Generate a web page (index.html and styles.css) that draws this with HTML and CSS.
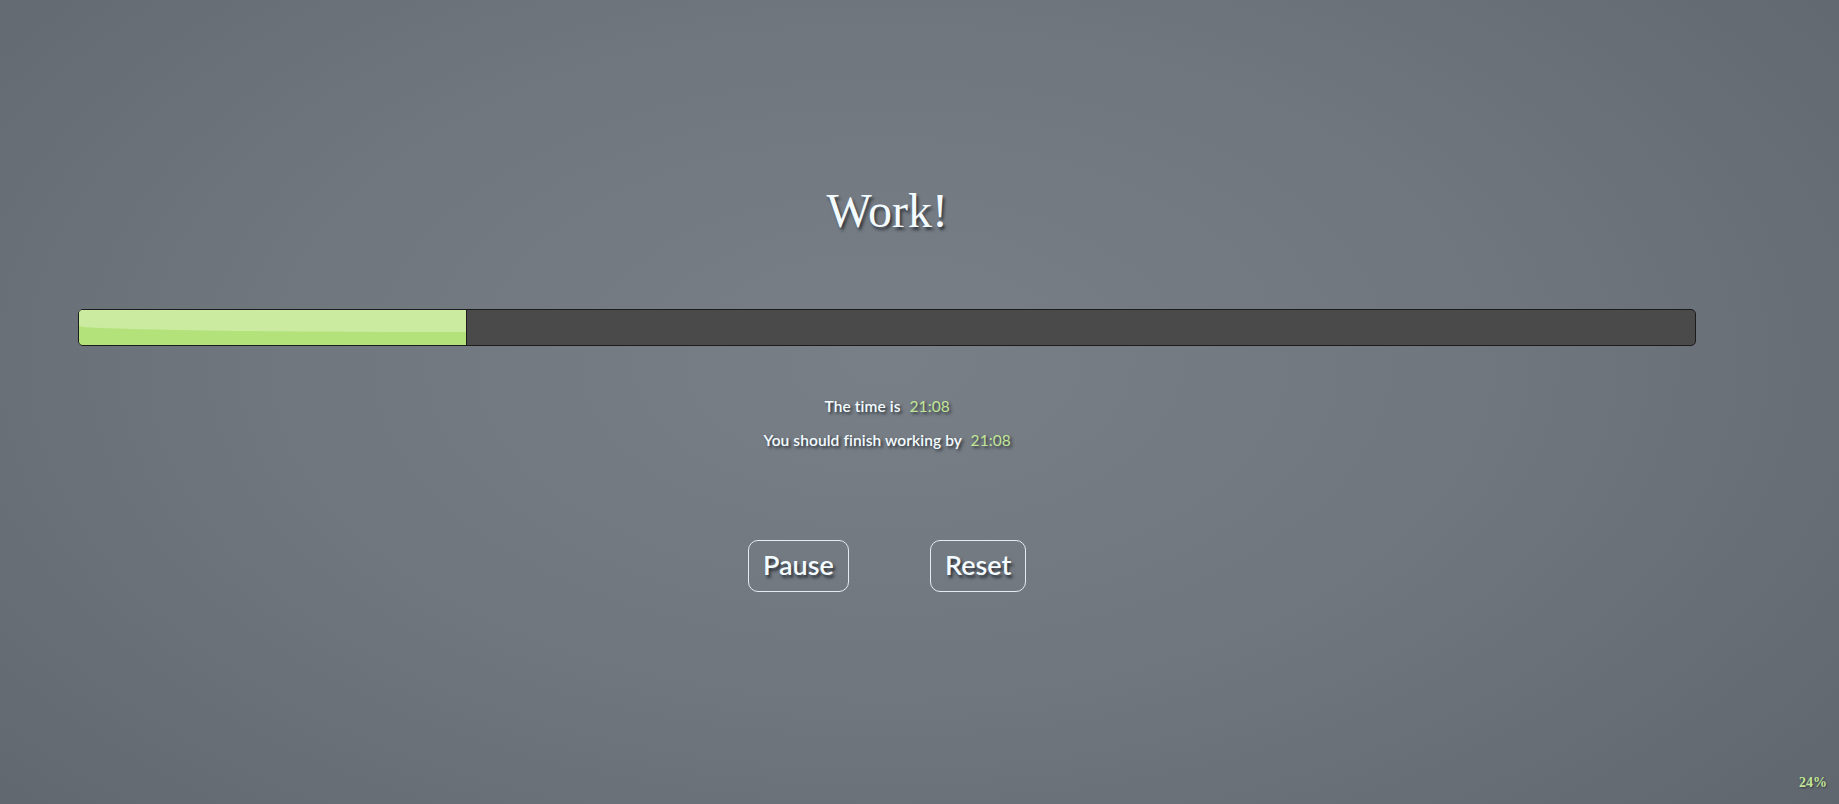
FILE: index.html
```html
<!DOCTYPE html>
<html lang="en">
<head>
<meta charset="utf-8">
<title>Work!</title>
<link rel="stylesheet" href="styles.css">
</head>
<body>
<main class="app">
  <h1 class="title">Work!</h1>
  <div class="bar">
    <div class="bar-fill" style="width: 24%"></div>
  </div>
  <div class="info">
    <p class="line">The time is <span class="hl">21:08</span></p>
    <p class="line">You should finish working by <span class="hl">21:08</span></p>
  </div>
  <div class="controls">
    <button class="btn">Pause</button>
    <button class="btn">Reset</button>
  </div>
</main>
<div class="percent">24%</div>
</body>
</html>
```

FILE: styles.css
```css
html, body {
  margin: 0;
  height: 100%;
}
body {
  background: radial-gradient(ellipse 75% 95% at 48% 45%, #787f87 0%, #6f767e 45%, #5c636b 100%);
  color: #f3fbff;
  font-family: Lato, "Open Sans", sans-serif;
  overflow: hidden;
  position: relative;
}
.app {
  width: 88%;
  margin-left: 78px;
  padding-top: 183px;
  display: flex;
  flex-direction: column;
  align-items: center;
}
.title {
  margin: 0;
  font-family: "Liberation Serif", "Times New Roman", serif;
  font-weight: normal;
  font-size: 48px;
  line-height: 56px;
  color: #f3fbff;
  text-shadow: 2px 3px 3px rgba(30, 34, 40, 0.75);
}
.bar {
  align-self: stretch;
  margin-top: 70px;
  height: 35px;
  border: 1px solid #1c1c1c;
  border-radius: 5px;
  background: #4a4a4a;
  overflow: hidden;
  display: flex;
}
.bar-fill {
  position: relative;
  height: 100%;
  background: #b3e27b;
  border-right: 1px solid #1c1c1c;
  box-sizing: border-box;
  overflow: hidden;
}
.bar-fill::before {
  content: "";
  position: absolute;
  left: 0;
  right: 0;
  top: 0;
  height: 22px;
  background: #cbeba0;
  border-bottom-left-radius: 100% 6px;
}
.info {
  margin-top: 43px;
  display: flex;
  flex-direction: column;
  align-items: center;
}
.line {
  margin: 0;
  font-size: 15.5px;
  line-height: 34px;
  font-weight: 600;
  letter-spacing: 0.1px;
  text-shadow: 2px 2px 3px rgba(30, 34, 40, 0.8);
}
.hl {
  color: #c2e697;
  margin-left: 5px;
  font-weight: 400;
}
.controls {
  margin-top: 83px;
  display: flex;
  gap: 81px;
}
.btn {
  font-family: Lato, "Open Sans", sans-serif;
  font-size: 27px;
  font-weight: 600;
  color: #f3fbff;
  background: transparent;
  border: 1px solid #e4ecef;
  border-radius: 10px;
  height: 52px;
  padding: 0 14px 4px;
  text-shadow: 2px 3px 3px rgba(30, 34, 40, 0.8);
  cursor: pointer;
}
.percent {
  position: absolute;
  right: 12px;
  bottom: 13px;
  font-family: "Liberation Serif", serif;
  font-weight: bold;
  font-size: 14px;
  color: #c2e697;
  text-shadow: 1px 1px 2px rgba(30, 34, 40, 0.7);
}
```
